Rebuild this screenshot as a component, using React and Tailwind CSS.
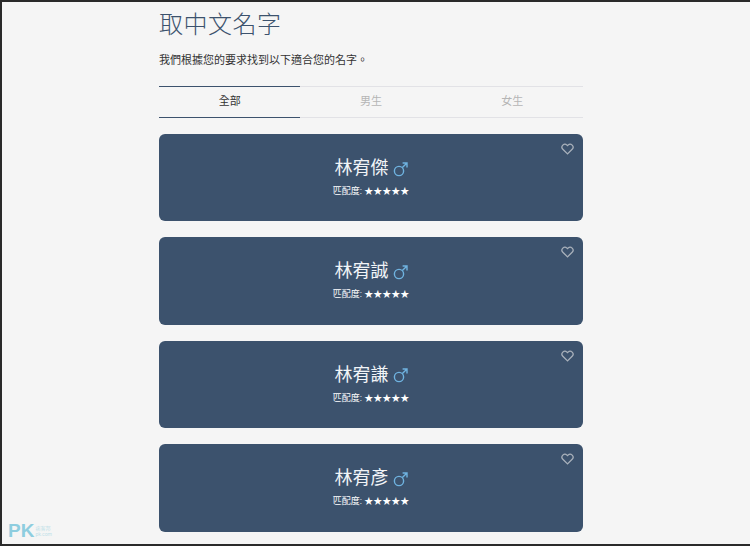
import { useState } from "react";

const names = ["林宥傑", "林宥誠", "林宥謙", "林宥彥"];
const tabs = ["全部", "男生", "女生"];

const MaleIcon = () => (
  <svg width="15" height="15" viewBox="0 0 15 15" fill="none" stroke="#6fb3e0" strokeWidth="1.4" className="ml-1 mt-[2px]">
    <circle cx="6" cy="9" r="4.6" />
    <path d="M9.4 5.6 14 1M9.6 1H14V5.4" />
  </svg>
);

const HeartIcon = () => (
  <svg width="13" height="12" viewBox="0 0 24 22" fill="none" stroke="#a9b1bb" strokeWidth="2.4">
    <path d="M12 20 3.4 11.4a5.4 5.4 0 0 1 0-7.6 5.4 5.4 0 0 1 7.6 0l1 1 1-1a5.4 5.4 0 0 1 7.6 0 5.4 5.4 0 0 1 0 7.6z" />
  </svg>
);

const NameCard = ({ name }) => (
  <div className="relative flex h-[87.4px] flex-col items-center rounded-md bg-[#3c526d] pt-[21px]">
    <button className="absolute right-[9px] top-[9px]">
      <HeartIcon />
    </button>
    <div className="flex h-[26px] items-center text-[18px] leading-[26px] text-[#f1f4f7]">
      {name}
      <MaleIcon />
    </div>
    <div className="mt-[3px] text-[9px] leading-[14px] text-white">
      匹配度: <span className="text-[9px]">★★★★★</span>
    </div>
  </div>
);

export default function App() {
  const [active] = useState(0);

  return (
    <div className="relative h-[546px] overflow-hidden border-2 border-r-0 border-[#2a2a2a] bg-[#f5f5f5] font-['Roboto','Noto_Sans_CJK_TC',sans-serif]">
      <div className="ml-[157px] w-[424px]">
        <h1 className="pt-[8px] text-[24px] font-light leading-[30px] tracking-[0.5px] text-[#3c526d]">取中文名字</h1>
        <p className="mt-[13px] text-[11px] leading-[16px] text-[#333]">我們根據您的要求找到以下適合您的名字。</p>

        <div className="mt-[17px] grid grid-cols-3">
          {tabs.map((tab, i) => (
            <div
              key={tab}
              className={`flex h-[32px] items-center justify-center border-y text-[11px] ${
                i === active ? "border-[#3c526d] text-[#333]" : "border-[#e2e2e6] text-[#b5b5b5]"
              }`}
            >
              {tab}
            </div>
          ))}
        </div>

        <div className="mt-[16px] flex flex-col gap-[16px]">
          {names.map((name) => (
            <NameCard key={name} name={name} />
          ))}
        </div>
      </div>

      {/* watermark */}
      <div className="absolute bottom-[2px] left-[6px] flex items-center opacity-70">
        <span className="font-['Liberation_Sans',sans-serif] text-[19px] font-bold leading-[22px] text-[#63bdd6]">PK</span>
        <div className="ml-[1px] flex flex-col text-[5px] leading-[6px] text-[#a9d8e4]">
          <span>痞客邦</span>
          <span>pk.com</span>
        </div>
      </div>
    </div>
  );
}
